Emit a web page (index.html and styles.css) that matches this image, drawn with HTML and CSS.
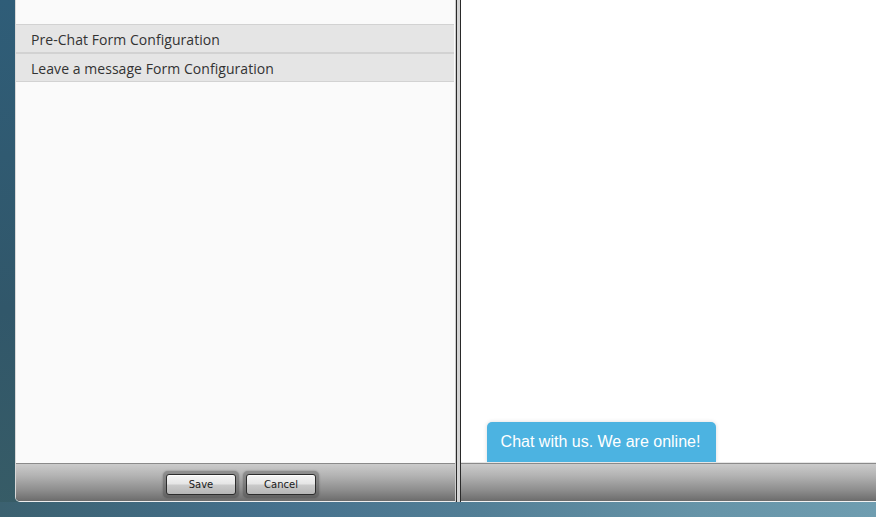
FILE: index.html
```html
<!DOCTYPE html>
<html>
<head>
<meta charset="utf-8">
<link rel="stylesheet" href="styles.css">
</head>
<body>
<div class="desktop">
  <div class="window">
    <div class="panel panel-left">
      <div class="panel-body">
        <div class="menu">
          <div class="menu-item">Pre-Chat Form Configuration</div>
          <div class="menu-item">Leave a message Form Configuration</div>
        </div>
      </div>
      <div class="toolbar toolbar-left">
        <div class="btn-wrap"><button class="btn">Save</button></div>
        <div class="btn-wrap"><button class="btn">Cancel</button></div>
      </div>
    </div>
    <div class="splitter"></div>
    <div class="panel panel-right">
      <div class="panel-body preview">
        <div class="chat-tab">Chat with us. We are online!</div>
      </div>
      <div class="toolbar toolbar-right"></div>
    </div>
  </div>
</div>
</body>
</html>
```
FILE: styles.css
```css
html, body {
  margin: 0;
  padding: 0;
  width: 876px;
  height: 517px;
  overflow: hidden;
}
body {
  background: linear-gradient(180deg, #2f5d78 0%, #31576a 60%, #375c66 100%);
  font-family: "Open Sans", "DejaVu Sans", sans-serif;
}
.desktop {
  height: 517px;
  padding-left: 15px;
  box-sizing: border-box;
  background:
    linear-gradient(90deg, #3b6170 0%, #45708c 30%, #537f96 55%, #6694a8 80%, #6f9db0 100%) 0 502px / 100% 15px no-repeat,
    linear-gradient(180deg, #2f5d78 0%, #31576a 60%, #375c66 100%);
}
.window {
  display: flex;
  height: 502px;
  width: 861px;
}
.panel {
  display: flex;
  flex-direction: column;
}
.panel-left {
  width: 440px;
  border-left: 1px solid #d8d8d8;
  border-bottom: 1px solid #eeeeee;
  border-bottom-left-radius: 5px;
  overflow: hidden;
  box-sizing: border-box;
}
.panel-right {
  flex: 1;
  border-bottom: 1px solid #f2f2f2;
  box-sizing: border-box;
}
.panel-body {
  flex: 1;
  background: #fafafa;
}
.menu {
  padding-top: 24px;
}
.menu-item {
  height: 26px;
  padding-top: 1px;
  line-height: 27px;
  background: #e5e5e5;
  border-top: 1px solid #d2d2d2;
  border-bottom: 1px solid #d2d2d2;
  padding-left: 15px;
  font-size: 14px;
  letter-spacing: 0.05px;
  color: #333333;
  margin-right: 1px;
}
.splitter {
  width: 5px;
  box-sizing: border-box;
  background: #d4d4d4;
  border-left: 1px solid #2a2a2a;
  border-right: 1px solid #2a2a2a;
  margin-left: 1px;
  box-shadow: -1px 0 0 #cccccc;
}
.toolbar {
  height: 38px;
  box-sizing: border-box;
  background: linear-gradient(180deg, #cbcbcb 0%, #b4b4b4 30%, #8e8e8e 70%, #6c6c6c 100%);
  border-top: 1px solid #8a8a8a;
}
.toolbar-left {
  display: flex;
  justify-content: center;
  align-items: center;
  gap: 4px;
  padding-left: 11px;
  padding-top: 3px;
}
.toolbar-right {
  box-shadow: 0 -1px 0 #e6e6e6;
}
.btn-wrap {
  padding: 3px;
  border-radius: 5px;
  background: rgba(60, 60, 60, 0.35);
  box-shadow: 0 0 2px rgba(40, 40, 40, 0.4);
}
.btn {
  display: block;
  width: 70px;
  height: 21px;
  margin: 0;
  padding: 1px 0 0;
  border: 1px solid #2c2c2c;
  border-radius: 3px;
  background: linear-gradient(180deg, #f6f6f6 0%, #e6e6e6 45%, #c9c9c9 55%, #b6b6b6 100%);
  box-shadow: inset 0 1px 0 #ffffff;
  font-family: "DejaVu Sans", sans-serif;
  font-size: 10px;
  color: #1a1a1a;
  line-height: 18px;
}
.preview {
  background: #ffffff;
  display: flex;
  align-items: flex-end;
  padding-left: 26px;
}
.chat-tab {
  width: 229px;
  height: 41px;
  box-sizing: border-box;
  background: #4cb3e1;
  border-radius: 5px 5px 0 0;
  box-shadow: 0 0 4px rgba(0, 0, 0, 0.15);
  color: #ffffff;
  font-family: "Liberation Sans", Arial, sans-serif;
  font-size: 16px;
  line-height: 39px;
  text-align: center;
  padding-right: 2px;
}
```
